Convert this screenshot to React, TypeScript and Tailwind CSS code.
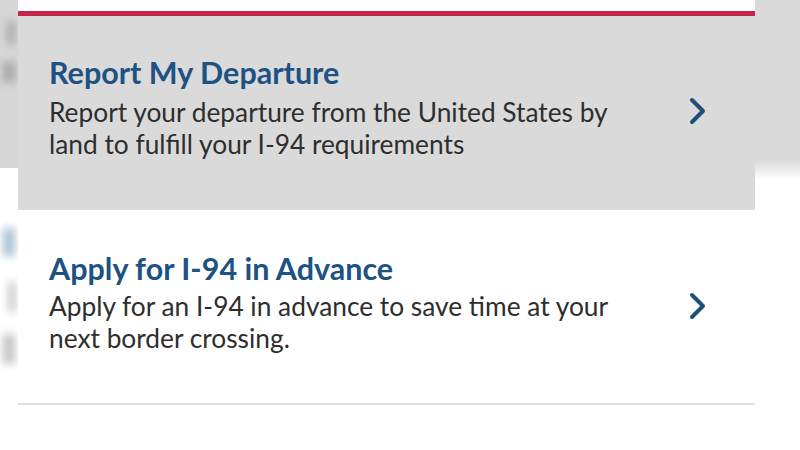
import React from 'react';

const items = [
  {
    title: 'Report My Departure',
    lines: ['Report your departure from the United States by', 'land to fulfill your I-94 requirements'],
    active: true,
  },
  {
    title: 'Apply for I-94 in Advance',
    lines: ['Apply for an I-94 in advance to save time at your', 'next border crossing.'],
    active: false,
  },
];

function Chevron() {
  return (
    <svg width="20" height="28" viewBox="0 0 20 28" className="shrink-0">
      <path d="M4 3 L15 14 L4 25" fill="none" stroke="#1d4f7a" strokeWidth="4" strokeLinecap="round" strokeLinejoin="round" />
    </svg>
  );
}

function EdgeBlur({ side }: { side: 'left' | 'right' }) {
  if (side === 'right') {
    return (
      <div className="flex-1 flex flex-col">
        <div className="h-[160px] bg-[#dadada]" />
        <div className="h-[20px] bg-gradient-to-b from-[#dadada] to-white" />
        <div className="flex-1 bg-white" />
      </div>
    );
  }
  return (
    <div className="w-[18px] flex flex-col overflow-hidden">
      <div className="h-[168px] bg-[#d6d6d6] flex flex-col items-center">
        <div className="mt-[22px] w-[6px] h-[22px] bg-[#9a9a9a] blur-[4px] ml-[4px]" />
        <div className="mt-[18px] w-[12px] h-[20px] bg-[#a6a6a6] blur-[4px]" />
      </div>
      <div className="flex-1 bg-white flex flex-col items-center">
        <div className="mt-[60px] w-[12px] h-[28px] bg-[#a9c2d4] blur-[4px]" />
        <div className="mt-[26px] w-[6px] h-[30px] bg-[#bcbcbc] blur-[4px] ml-[6px]" />
        <div className="mt-[22px] w-[12px] h-[30px] bg-[#c4c4c4] blur-[4px]" />
      </div>
    </div>
  );
}

export default function App() {
  return (
    <div className="w-[800px] h-[450px] overflow-hidden flex bg-white font-['Lato','Open_Sans',sans-serif]">
      <EdgeBlur side="left" />
      <div className="w-[737px] flex flex-col">
        <div className="h-[11px] bg-white" />
        <div className="h-[5px] bg-[#c5264b]" />
        {items.map((item, i) => (
          <div
            key={item.title}
            className={
              item.active
                ? 'bg-[#dadada] pl-[31px] pr-[47px] pt-[40px] pb-[50px] flex items-center justify-between'
                : 'bg-white border-b-2 border-[#e2e2e2] pl-[31px] pr-[47px] pt-[42px] pb-[49px] flex items-center justify-between'
            }
          >
            <div className="flex flex-col">
              <div className="text-[30.5px] leading-[32px] font-bold text-[#1d5283]">{item.title}</div>
              <div className={i === 0 ? 'mt-[8px]' : 'mt-[6px]'}>
                {item.lines.map((l) => (
                  <div key={l} className="text-[26.3px] leading-[32px] text-[#2e2e2e]">{l}</div>
                ))}
              </div>
            </div>
            <div className="mt-[6px]">
              <Chevron />
            </div>
          </div>
        ))}
        <div className="flex-1 bg-white" />
      </div>
      <EdgeBlur side="right" />
    </div>
  );
}
